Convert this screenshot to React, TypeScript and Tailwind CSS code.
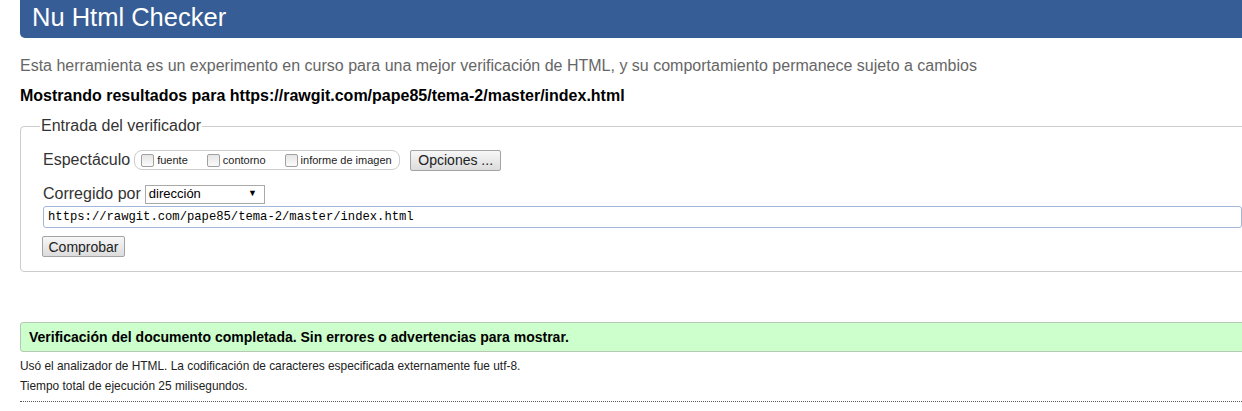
import { useState } from 'react';

const url = 'https://rawgit.com/pape85/tema-2/master/index.html';

const Check = ({ label }: { label: string }) => (
  <label className="flex items-center gap-[3px] text-[11px] text-[#222]">
    <span className="inline-block w-[13px] h-[13px] rounded-[2px] border border-[#a0a0a0] bg-gradient-to-b from-[#e6e6e6] to-[#fafafa]" />
    <span>{label}</span>
  </label>
);

const GrayButton = ({ children, className }: { children: string; className?: string }) => (
  <button
    className={`h-[21px] px-0 whitespace-nowrap text-[14px] leading-none text-[#222] border border-[#a3a3a3] rounded-[2px] bg-gradient-to-b from-[#f7f7f7] to-[#dcdcdc] ${className ?? ''}`}
  >
    {children}
  </button>
);

export default function App() {
  const [value] = useState(url);

  return (
    <div className="w-[1242px] h-[411px] overflow-hidden bg-white font-['Liberation_Sans',Arial,sans-serif]">
      <div className="ml-[20px] w-[1240px]">
        <header className="h-[38px] bg-[#365d95] rounded-bl-[5px] pl-[12px] flex items-center">
          <h1 className="text-white text-[25.5px] leading-none pb-[2px]">Nu Html Checker</h1>
        </header>

        <p className="mt-[19px] text-[16px] text-[#666] leading-[18px]">
          Esta herramienta es un experimento en curso para una mejor verificación de HTML, y su comportamiento
          permanece sujeto a cambios
        </p>
        <p className="mt-[12px] text-[16px] font-bold text-black leading-[18px]">
          Mostrando resultados para {url}
        </p>

        <fieldset className="mt-[12px] h-[155px] border border-[#ccc] rounded-[4px] pl-[22px] pr-0">
          <legend className="ml-[-3px] px-[1px] text-[16px] text-[#333] leading-[18px]">
            Entrada del verificador
          </legend>

          <div className="mt-[14px] flex items-center h-[22px]">
            <span className="text-[16px] text-[#333] mr-[4px]">Espectáculo</span>
            <div className="flex items-center h-[20px] w-[266px] border border-[#ccc] rounded-[8px] pl-[6px] gap-[19px]">
              <Check label="fuente" />
              <Check label="contorno" />
              <Check label="informe de imagen" />
            </div>
            <GrayButton className="ml-[10px] w-[91px]">Opciones ...</GrayButton>
          </div>

          <div className="mt-[13px] flex items-center h-[20px]">
            <span className="text-[16px] text-[#333] mr-[4px]">Corregido por</span>
            <div className="h-[19px] w-[120px] border border-[#a9a9a9] flex items-center justify-between px-[3px] text-[13px] text-black">
              <span>dirección</span>
              <span className="text-[9px] pr-[4px]">▼</span>
            </div>
          </div>

          <input
            readOnly
            value={value}
            className="mt-[2px] block w-[1199px] h-[22px] border border-[#a4b6dc] rounded-[3px] px-[4px] text-[12.2px] text-black font-['Liberation_Mono',monospace] outline-none"
          />

          <GrayButton className="mt-[8px] ml-[-1px] block w-[83px]">Comprobar</GrayButton>
        </fieldset>

        <div className="mt-[50px] h-[30px] bg-[#ccffcc] border border-[#b5c9b5] rounded-l-[3px] pl-[8px] flex items-center">
          <p className="text-[14px] font-bold text-black">
            Verificación del documento completada. Sin errores o advertencias para mostrar.
          </p>
        </div>

        <p className="mt-[6px] text-[11.9px] text-[#222] leading-[16px]">
          Usó el analizador de HTML. La codificación de caracteres especificada externamente fue utf-8.
        </p>
        <p className="mt-[4px] text-[11.9px] text-[#222] leading-[16px]">Tiempo total de ejecución 25 milisegundos.</p>
        <div className="mt-[7px] border-t border-dotted border-[#555]" />
      </div>
    </div>
  );
}
